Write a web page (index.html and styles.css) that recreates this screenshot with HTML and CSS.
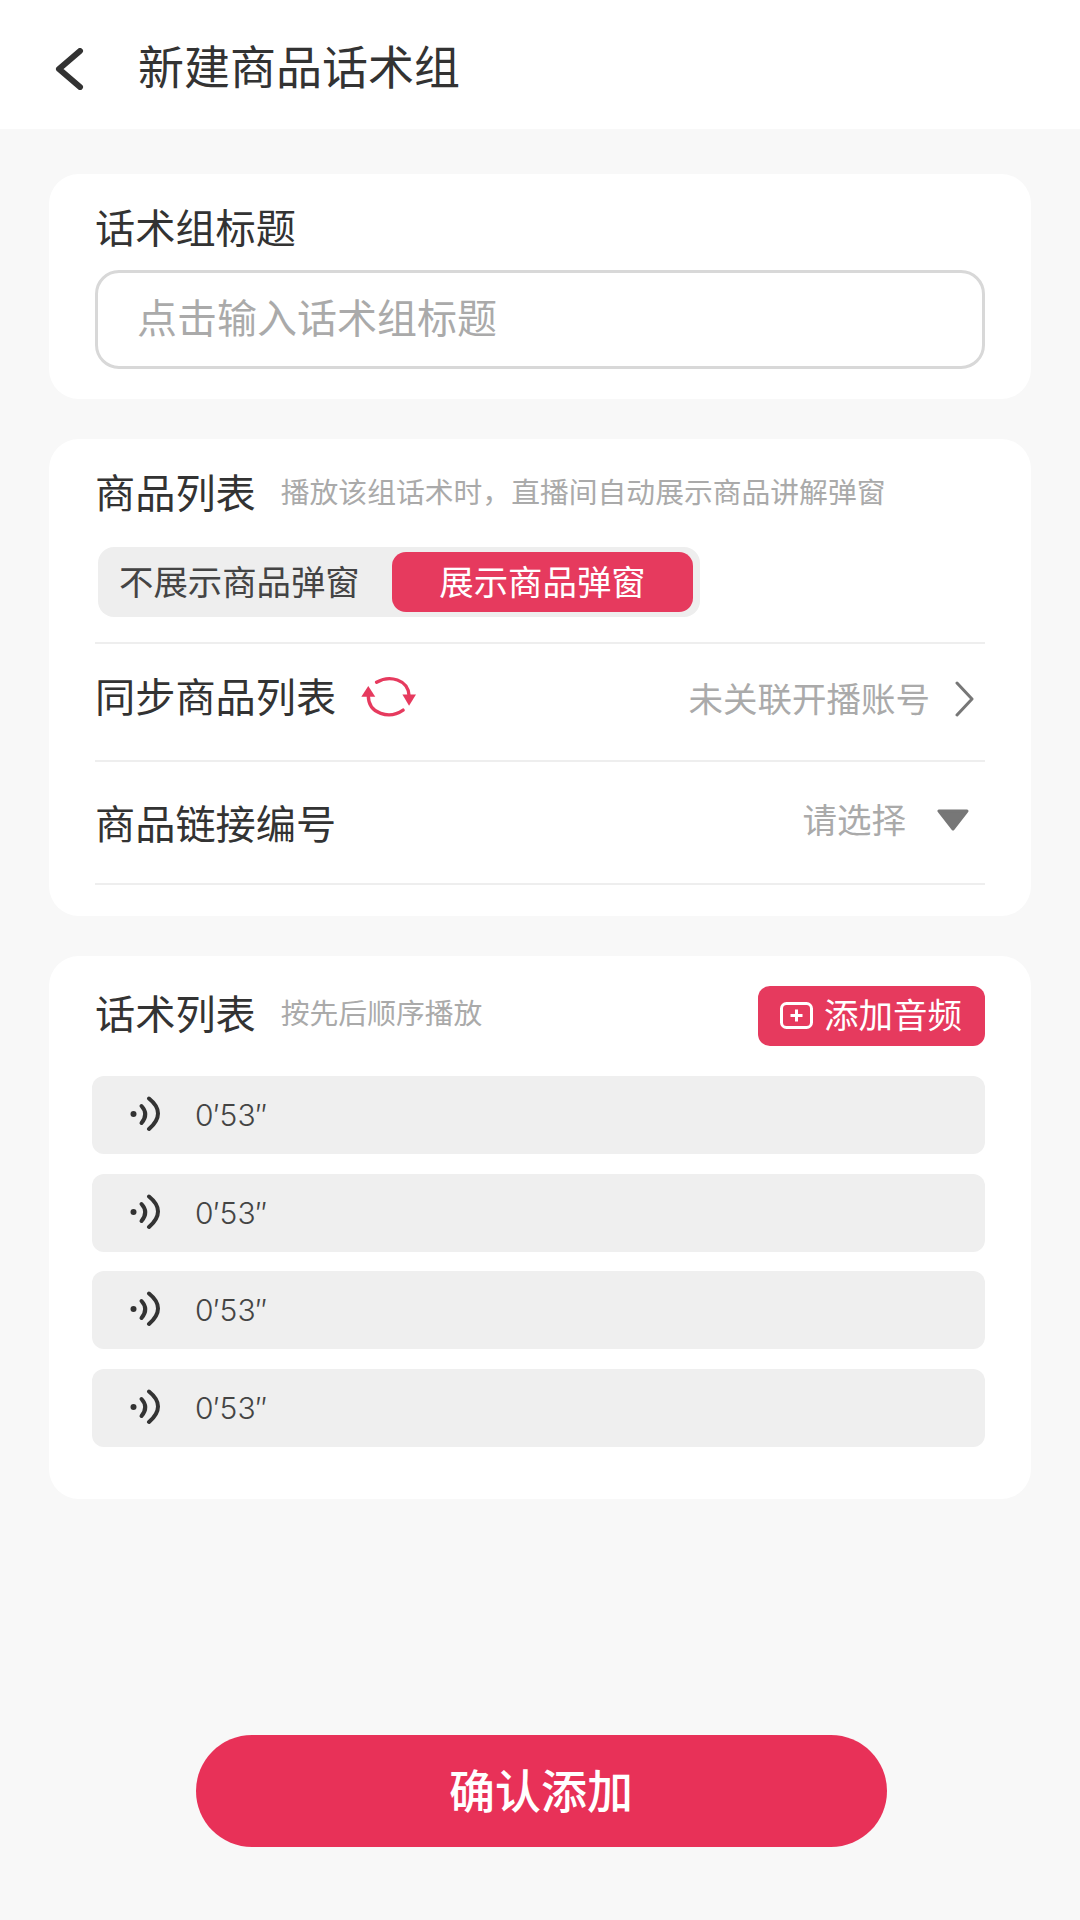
FILE: index.html
```html
<!DOCTYPE html>
<html lang="zh-CN">
<head>
  <meta charset="UTF-8">
  <meta name="viewport" content="width=device-width, initial-scale=1.0">
  <title>新建商品话术组</title>
  <link rel="stylesheet" href="styles.css">
</head>
<body>
  <div class="page">
    <header class="topbar">
      <svg class="back-icon" width="30" height="42" viewBox="0 0 30 42"><path d="M26 3 L5 21 L26 39" /></svg>
      <h1>新建商品话术组</h1>
    </header>

    <main class="content">
      <section class="card card-title">
        <h2 class="label">话术组标题</h2>
        <div class="text-input">点击输入话术组标题</div>
      </section>

      <section class="card card-goods">
        <div class="card-head">
          <h2 class="label">商品列表</h2>
          <span class="hint">播放该组话术时，直播间自动展示商品讲解弹窗</span>
        </div>
        <div class="toggle-row">
          <div class="toggle">
            <span class="toggle-item">不展示商品弹窗</span>
            <span class="toggle-item active">展示商品弹窗</span>
          </div>
        </div>
        <div class="row row-sync">
          <div class="row-left">
            <span class="label">同步商品列表</span>
            <svg class="sync-icon" width="57" height="42" viewBox="60 50 172 125">
              <path class="arc" d="M110 68 C150 45 205 60 208 108" />
              <path class="arc" d="M190 152 C150 180 85 165 85 108" />
              <path class="tip" d="M188 105 L229 105 L208 139 Z" />
              <path class="tip" d="M64 112 L106 112 L85 79 Z" />
            </svg>
          </div>
          <div class="row-right">
            <span class="value">未关联开播账号</span>
            <svg class="chevron" width="19" height="36" viewBox="0 0 19 36"><path d="M2 2 L17 18 L2 34" /></svg>
          </div>
        </div>
        <div class="row row-link">
          <span class="label">商品链接编号</span>
          <div class="row-right">
            <span class="value">请选择</span>
            <svg class="caret" width="34" height="22" viewBox="0 0 34 22"><path d="M3 2 H31 L17 20 Z" /></svg>
          </div>
        </div>
      </section>

      <section class="card card-speech">
        <div class="card-head">
          <div class="speech-title">
            <h2 class="label">话术列表</h2>
            <span class="hint">按先后顺序播放</span>
          </div>
          <button class="add-btn">
            <svg width="33" height="27" viewBox="0 0 33 27">
              <rect x="1.5" y="1.5" width="30" height="24" rx="5" />
              <path d="M16.5 7.5 V19.5 M10.5 13.5 H22.5" />
            </svg>
            <span class="add-text">添加音频</span>
          </button>
        </div>
        <div class="audio-list">
          <div class="audio-item">
            <svg class="voice-icon" width="32" height="36" viewBox="0 0 32 36"><circle cx="4.5" cy="18" r="3" /><path d="M12.5 10 Q20 18 12.5 27" /><path d="M20 2.5 Q38 17 20 33" /></svg>
            <span class="duration">0′53″</span>
          </div>
          <div class="audio-item">
            <svg class="voice-icon" width="32" height="36" viewBox="0 0 32 36"><circle cx="4.5" cy="18" r="3" /><path d="M12.5 10 Q20 18 12.5 27" /><path d="M20 2.5 Q38 17 20 33" /></svg>
            <span class="duration">0′53″</span>
          </div>
          <div class="audio-item">
            <svg class="voice-icon" width="32" height="36" viewBox="0 0 32 36"><circle cx="4.5" cy="18" r="3" /><path d="M12.5 10 Q20 18 12.5 27" /><path d="M20 2.5 Q38 17 20 33" /></svg>
            <span class="duration">0′53″</span>
          </div>
          <div class="audio-item">
            <svg class="voice-icon" width="32" height="36" viewBox="0 0 32 36"><circle cx="4.5" cy="18" r="3" /><path d="M12.5 10 Q20 18 12.5 27" /><path d="M20 2.5 Q38 17 20 33" /></svg>
            <span class="duration">0′53″</span>
          </div>
        </div>
      </section>
    </main>

    <button class="confirm-btn">确认添加</button>
  </div>
</body>
</html>
```

FILE: styles.css
```css
* {
  box-sizing: border-box;
}
html, body {
  margin: 0;
  padding: 0;
}
body {
  font-family: "Noto Sans CJK SC", "Noto Sans", sans-serif;
  color: #333;
  background-color: #f8f8f8;
}
h1, h2 {
  margin: 0;
  font-weight: 400;
}
.page {
  display: flex;
  flex-direction: column;
  height: 1920px;
  overflow: hidden;
}
.topbar {
  display: flex;
  align-items: center;
  flex-shrink: 0;
  height: 129px;
  padding: 0 0 0 54px;
  background-color: #fff;
}
.topbar h1 {
  margin-left: 54px;
  margin-top: -2px;
  font-size: 46px;
  line-height: 60px;
}
.back-icon {
  margin-top: 8px;
}
.back-icon path {
  fill: none;
  stroke: #333;
  stroke-width: 6;
  stroke-linecap: round;
  stroke-linejoin: round;
}
.content {
  padding: 45px 49px 0;
}
.card {
  margin-bottom: 40px;
  padding: 30px 46px;
  background-color: #fff;
  border-radius: 30px;
}
.label {
  font-size: 40.2px;
  line-height: 44px;
  padding-bottom: 4px;
  color: #333;
}
.hint {
  margin-left: 25px;
  font-size: 28.8px;
  line-height: 40px;
  padding-bottom: 5px;
  color: #aaa;
}
.text-input {
  display: flex;
  align-items: center;
  height: 99px;
  margin-top: 18px;
  padding: 0 0 7px 39px;
  font-size: 40px;
  color: #aaa;
  border: 3px solid #d8d8d8;
  border-radius: 24px;
}
.card-goods {
  padding-bottom: 31px;
}
.card-head {
  display: flex;
  align-items: center;
}
.toggle-row {
  padding: 30px 0 25px;
  border-bottom: 2px solid #eee;
}
.toggle {
  display: inline-flex;
  align-items: center;
  justify-content: space-between;
  width: 602px;
  height: 70px;
  margin-left: 3px;
  padding: 0 7px 0 21px;
  background-color: #eee;
  border-radius: 16px;
  font-size: 34.4px;
  color: #444;
  vertical-align: top;
}
.toggle-item {
  padding-bottom: 4px;
}
.toggle-item.active {
  display: flex;
  align-items: center;
  justify-content: center;
  width: 301px;
  height: 60px;
  color: #fff;
  background-color: #e63a5e;
  border-radius: 14px;
}
.row {
  display: flex;
  align-items: center;
  justify-content: space-between;
  border-bottom: 2px solid #eee;
}
.row-sync {
  height: 118px;
  padding-bottom: 10px;
}
.row-link {
  height: 123px;
  padding-top: 2px;
}
.row-left, .row-right {
  display: flex;
  align-items: center;
}
.row-sync .row-right {
  margin-top: 4px;
}
.row-link .row-right {
  margin-bottom: 8px;
}
.value {
  font-size: 34.5px;
  padding-bottom: 4px;
  color: #aaa;
}
.sync-icon {
  margin-left: 24px;
}
.sync-icon .arc {
  fill: none;
  stroke: #e63a5e;
  stroke-width: 10;
  stroke-linecap: round;
}
.sync-icon .tip {
  fill: #e63a5e;
}
.chevron {
  margin: 0 11px 0 25px;
}
.chevron path {
  fill: none;
  stroke: #777;
  stroke-width: 3;
  stroke-linecap: round;
  stroke-linejoin: round;
}
.caret {
  margin: 0 15px 0 30px;
}
.caret path {
  fill: #777;
  stroke: #777;
  stroke-width: 3;
  stroke-linejoin: round;
}
.card-speech {
  padding-bottom: 52px;
}
.card-speech .card-head {
  justify-content: space-between;
}
.speech-title {
  display: flex;
  align-items: center;
  margin-top: -5px;
}
.add-btn {
  display: flex;
  align-items: center;
  gap: 11px;
  width: 227px;
  height: 60px;
  margin-bottom: 1px;
  padding: 0 0 0 22px;
  font-family: inherit;
  font-size: 34.5px;
  color: #fff;
  background-color: #e63a5e;
  border: none;
  border-radius: 12px;
}
.add-btn svg {
  margin-bottom: 2px;
}
.add-text {
  padding-bottom: 6px;
}
.add-btn rect, .add-btn path {
  fill: none;
  stroke: #fff;
  stroke-width: 3;
}
.audio-list {
  display: flex;
  flex-direction: column;
  gap: 19.7px;
  margin: 29px 0 0 -3px;
}
.audio-item {
  display: flex;
  align-items: center;
  height: 78px;
  padding-left: 37px;
  background-color: #efefef;
  border-radius: 12px;
}
.voice-icon {
  margin-bottom: 2px;
}
.voice-icon circle {
  fill: #333;
}
.voice-icon path {
  fill: none;
  stroke: #333;
  stroke-width: 4;
  stroke-linecap: round;
}
.duration {
  margin-left: 34px;
  font-family: Inter, "Noto Sans", sans-serif;
  font-size: 30px;
  font-weight: 300;
  color: #444;
}
.confirm-btn {
  align-self: center;
  width: 691px;
  height: 112px;
  margin-top: auto;
  margin-bottom: 73px;
  margin-left: 2px;
  padding-bottom: 8px;
  font-family: inherit;
  font-size: 46px;
  font-weight: 500;
  color: #fff;
  background-color: #e83158;
  border: none;
  border-radius: 56px;
}
```
